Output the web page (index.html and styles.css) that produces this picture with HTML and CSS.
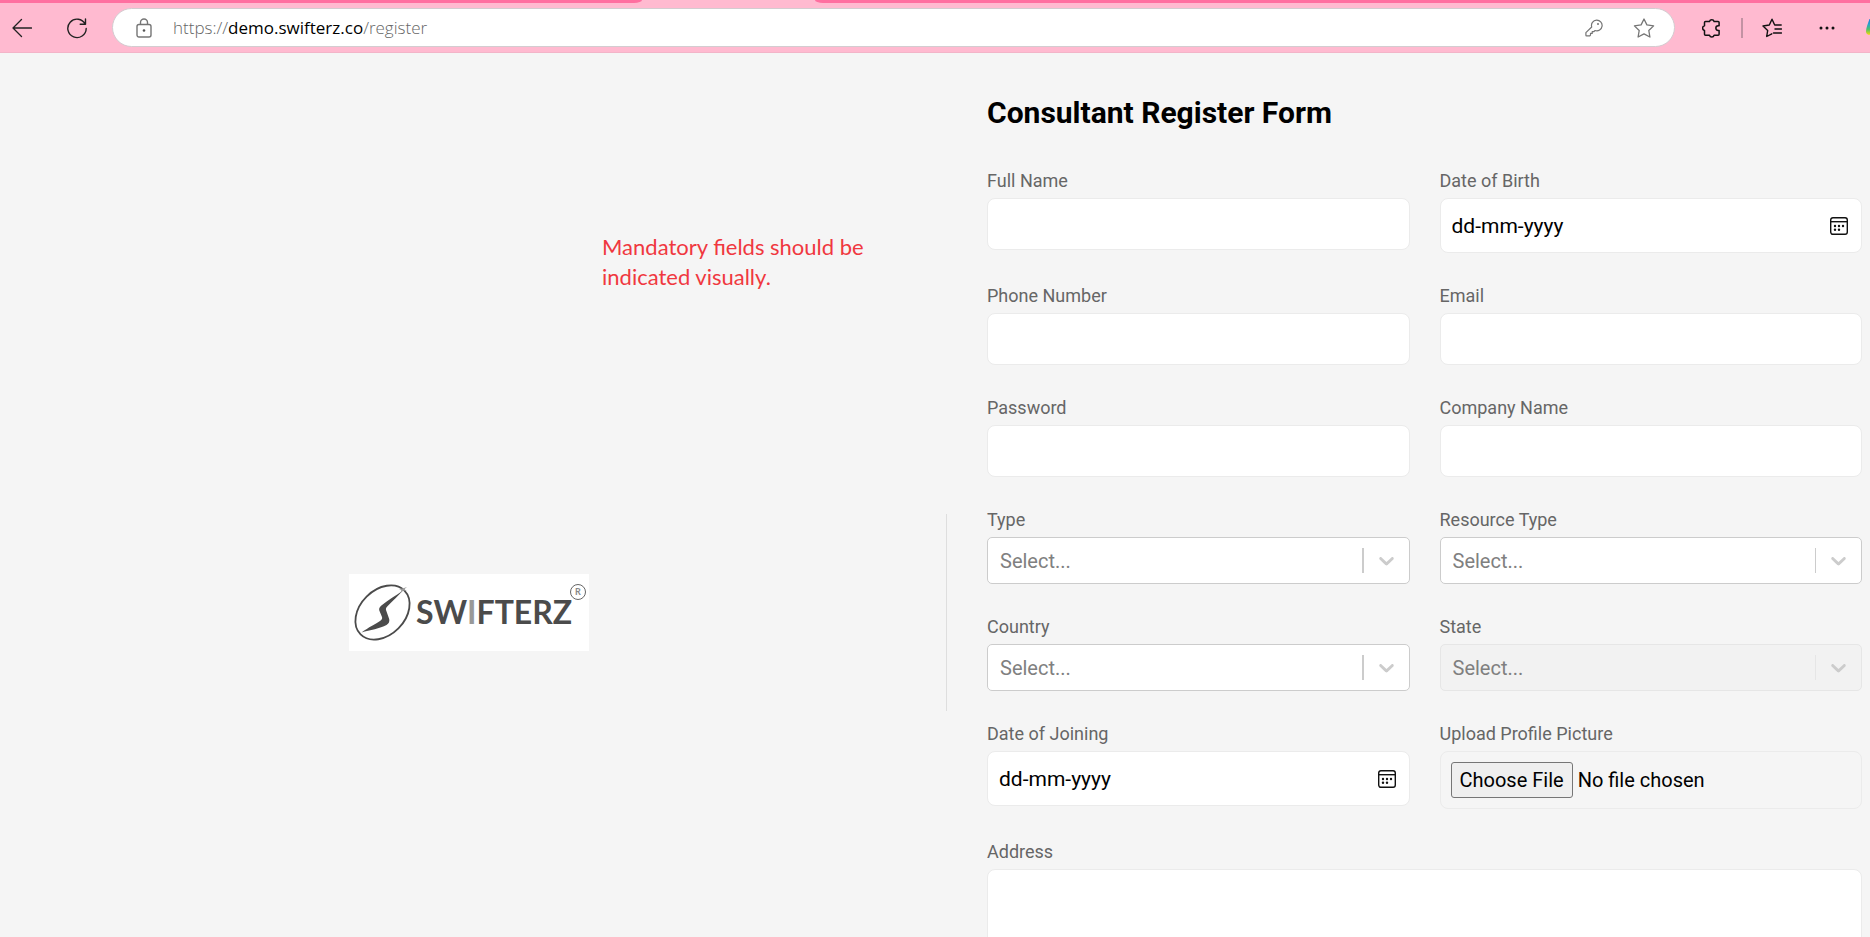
FILE: index.html
```html
<!DOCTYPE html>
<html lang="en">
<head>
<meta charset="utf-8">
<title>Consultant Register Form</title>
<link rel="stylesheet" href="styles.css">
</head>
<body>
<div class="shell">
  <div class="tabstrip"><span class="tabs-before"></span><span class="tab-active"></span><span class="tabs-after"></span></div>
  <header class="toolbar">
    <button class="icon-btn back" type="button" aria-label="Back">
      <svg width="20" height="20" viewBox="0 0 20 20" fill="none" stroke="#222" stroke-width="1.3" stroke-linecap="round" stroke-linejoin="round"><path d="M9.5 1.500 1 10l8.500 8.500M1 10h18.500"/></svg>
    </button>
    <button class="icon-btn refresh" type="button" aria-label="Refresh">
      <svg width="20" height="22" viewBox="0 0 20 22" fill="none" stroke="#222" stroke-width="1.400" stroke-linecap="round" stroke-linejoin="round"><path d="M18.200 7.200A9.200 9.200 0 1 0 19.200 11.500M18.500 2v5.300h-5.300"/></svg>
    </button>
    <div class="address">
      <svg class="lock" width="16" height="20" viewBox="0 0 16 20" fill="none" stroke="#757575" stroke-width="1.400"><rect x="1" y="6.500" width="14" height="12.500" rx="2"/><path d="M4.500 6.500V4.500a3.500 3.500 0 0 1 7 0v2"/><circle cx="8" cy="12.500" r="1.300" fill="#555" stroke="none"/></svg>
      <span class="url">https://<b>demo.swifterz.co</b>/register</span>
      <button class="icon-btn" type="button" aria-label="Saved passwords">
        <svg width="18" height="18" viewBox="0 0 18 18" fill="none" stroke="#757575" stroke-width="1.200" stroke-linejoin="round"><path d="M11.500 1.200a5.300 5.300 0 1 1-1.400 10.300L8.700 12.700H7.200v1.700H5.500v1.700L4.800 16.900H1.500a.6.6 0 0 1-.6-.6V13.600L6.700 8A5.300 5.300 0 0 1 11.500 1.200z"/><circle cx="13" cy="4.900" r="1" fill="#757575" stroke="none"/></svg>
      </button>
      <button class="icon-btn favorite" type="button" aria-label="Add to favorites">
        <svg width="22" height="20" viewBox="0 0 22 20" fill="none" stroke="#757575" stroke-width="1.300" stroke-linejoin="round"><path d="m11 1 2.900 5.900 6.700 1-4.800 4.600 1.100 6.500-5.900-3.100L5.100 19l1.100-6.500L1.400 7.900l6.700-1z"/></svg>
      </button>
    </div>
    <button class="icon-btn extensions" type="button" aria-label="Extensions">
      <svg width="18" height="20" viewBox="0 0 18 20" fill="none" stroke="#111" stroke-width="1.500" stroke-linejoin="round"><path d="M3.500 3.500h4a2.400 2.400 0 0 1 4.600 0h4a1 1 0 0 1 1 1v3.200h-.9a2.300 2.300 0 0 0 0 4.700h.9v3.800a1 1 0 0 1-1 1h-4a2.400 2.400 0 0 1-4.600 0h-4a1 1 0 0 1-1-1v-3.800a2.400 2.400 0 0 1 0-4.700V4.500a1 1 0 0 1 1-1z"/></svg>
    </button>
    <span class="sep"></span>
    <button class="icon-btn favorites" type="button" aria-label="Favorites">
      <svg width="20" height="20" viewBox="0 0 20 20" fill="none" stroke="#111" stroke-width="1.400" stroke-linecap="round" stroke-linejoin="round"><path d="M9.800 15.800 4.700 18.500l1-6.100L1 8l6.300-1L10 1.200 12.700 7h6.500M13 11h6.500M11.500 15h8"/></svg>
    </button>
    <button class="icon-btn more" type="button" aria-label="Settings and more">
      <svg width="16" height="4" viewBox="0 0 16 4" fill="#111"><circle cx="2" cy="2" r="1.500"/><circle cx="8" cy="2" r="1.500"/><circle cx="14" cy="2" r="1.500"/></svg>
    </button>
    <button class="icon-btn assistant" type="button" aria-label="Assistant">
      <svg width="24" height="18" viewBox="0 0 24 18"><defs><linearGradient id="g" x1="0" y1="0" x2="0" y2="1"><stop offset="0" stop-color="#1b78d8"/><stop offset=".35" stop-color="#2aa5c8"/><stop offset=".65" stop-color="#4fc16a"/><stop offset="1" stop-color="#f5d90a"/></linearGradient></defs><path d="M3.500 0C2 4 0 9 0 12.500 0 15 1.500 15.800 4 15.800h14c3 0 6-10 6-13S22 0 20 0z" fill="url(#g)"/></svg>
    </button>
  </header>

  <main class="page">
    <div class="content">
      <section class="brand">
        <p class="note">Mandatory fields should be indicated visually.</p>
        <svg class="logo" width="240" height="77" viewBox="0 0 240 77" role="img" aria-label="Swifterz">
          <rect width="240" height="77" fill="#fff"/>
          <ellipse cx="33.500" cy="38.500" rx="31" ry="22.500" transform="rotate(-45 33.500 38.500)" fill="none" stroke="#4b4b4b" stroke-width="1.800"/>
          <path d="M12.500 58.500C20 53 26 50.500 31 47c2-1.500 2.500-2.500 2-4l-2.700-6.500c-.6-2 .4-3.500 2.400-5.200C39 26 47 21.500 54 16.500 49 22 43.500 27 38.700 32c-1.500 1.500-2 2.500-1.700 4l3.200 9c.5 2.500-.3 4.500-2.700 6C31 54.500 21 56 12.500 58.500z" fill="#4b4b4b"/>
          <path d="m50 15 4.300-.8L58 13l-3 2.500 3 1-4 .3-2.500 2 .8-2.800z" fill="#999"/>
          <text class="wordmark" x="67" y="50">SW<tspan class="wordmark-light">I</tspan>FTERZ</text>
          <circle cx="229" cy="18" r="7.500" fill="#fff" stroke="#666" stroke-width="1"/>
          <text class="mark" x="229" y="21" text-anchor="middle">R</text>
        </svg>
        <span class="divider"></span>
      </section>

      <form class="register">
        <h1>Consultant Register Form</h1>
        <div class="fields">
          <div class="field"><label for="name">Full Name</label><input class="box" id="name" type="text"></div>
          <div class="field">
            <label for="dob">Date of Birth</label>
            <div class="box date"><input id="dob" type="text" placeholder="dd-mm-yyyy">
              <button class="icon-btn" type="button" aria-label="Pick date of birth"><svg width="18" height="18" viewBox="0 0 18 18" fill="none" stroke="#111" stroke-width="1.400"><rect x=".7" y=".7" width="16.600" height="16.600" rx="2.200"/><path d="M.7 4.700h16.600"/><g fill="#111" stroke="none"><circle cx="5" cy="9" r="1.200"/><circle cx="9" cy="9" r="1.200"/><circle cx="13" cy="9" r="1.200"/><circle cx="5" cy="12.800" r="1.200"/><circle cx="9" cy="12.800" r="1.200"/></g></svg></button>
            </div>
          </div>
          <div class="field"><label for="phone">Phone Number</label><input class="box" id="phone" type="tel"></div>
          <div class="field"><label for="email">Email</label><input class="box" id="email" type="email"></div>
          <div class="field"><label for="password">Password</label><input class="box" id="password" type="password"></div>
          <div class="field"><label for="company">Company Name</label><input class="box" id="company" type="text"></div>
          <div class="field">
            <label for="type">Type</label>
            <div class="picker thick"><select id="type"><option>Select...</option></select><span class="indicator"><svg width="25" height="25" viewBox="0 0 20 20"><path d="M4.516 7.548c0.436-0.446 1.043-0.481 1.576 0l3.908 3.747 3.908-3.747c0.533-0.481 1.141-0.446 1.574 0 0.436 0.445 0.408 1.197 0 1.615-0.406 0.418-4.695 4.502-4.695 4.502-0.217 0.223-0.502 0.335-0.787 0.335s-0.570-0.112-0.789-0.335c0 0-4.287-4.084-4.695-4.502s-0.436-1.170 0-1.615z"/></svg></span></div>
          </div>
          <div class="field">
            <label for="resource">Resource Type</label>
            <div class="picker"><select id="resource"><option>Select...</option></select><span class="indicator"><svg width="25" height="25" viewBox="0 0 20 20"><path d="M4.516 7.548c0.436-0.446 1.043-0.481 1.576 0l3.908 3.747 3.908-3.747c0.533-0.481 1.141-0.446 1.574 0 0.436 0.445 0.408 1.197 0 1.615-0.406 0.418-4.695 4.502-4.695 4.502-0.217 0.223-0.502 0.335-0.787 0.335s-0.570-0.112-0.789-0.335c0 0-4.287-4.084-4.695-4.502s-0.436-1.170 0-1.615z"/></svg></span></div>
          </div>
          <div class="field">
            <label for="country">Country</label>
            <div class="picker thick"><select id="country"><option>Select...</option></select><span class="indicator"><svg width="25" height="25" viewBox="0 0 20 20"><path d="M4.516 7.548c0.436-0.446 1.043-0.481 1.576 0l3.908 3.747 3.908-3.747c0.533-0.481 1.141-0.446 1.574 0 0.436 0.445 0.408 1.197 0 1.615-0.406 0.418-4.695 4.502-4.695 4.502-0.217 0.223-0.502 0.335-0.787 0.335s-0.570-0.112-0.789-0.335c0 0-4.287-4.084-4.695-4.502s-0.436-1.170 0-1.615z"/></svg></span></div>
          </div>
          <div class="field">
            <label for="state">State</label>
            <div class="picker disabled"><select id="state" disabled><option>Select...</option></select><span class="indicator"><svg width="25" height="25" viewBox="0 0 20 20"><path d="M4.516 7.548c0.436-0.446 1.043-0.481 1.576 0l3.908 3.747 3.908-3.747c0.533-0.481 1.141-0.446 1.574 0 0.436 0.445 0.408 1.197 0 1.615-0.406 0.418-4.695 4.502-4.695 4.502-0.217 0.223-0.502 0.335-0.787 0.335s-0.570-0.112-0.789-0.335c0 0-4.287-4.084-4.695-4.502s-0.436-1.170 0-1.615z"/></svg></span></div>
          </div>
          <div class="field">
            <label for="joining">Date of Joining</label>
            <div class="box date"><input id="joining" type="text" placeholder="dd-mm-yyyy">
              <button class="icon-btn" type="button" aria-label="Pick date of joining"><svg width="18" height="18" viewBox="0 0 18 18" fill="none" stroke="#111" stroke-width="1.400"><rect x=".7" y=".7" width="16.600" height="16.600" rx="2.200"/><path d="M.7 4.700h16.600"/><g fill="#111" stroke="none"><circle cx="5" cy="9" r="1.200"/><circle cx="9" cy="9" r="1.200"/><circle cx="13" cy="9" r="1.200"/><circle cx="5" cy="12.800" r="1.200"/><circle cx="9" cy="12.800" r="1.200"/></g></svg></button>
            </div>
          </div>
          <div class="field"><label for="picture">Upload Profile Picture</label><input class="box file" id="picture" type="file"></div>
          <div class="field wide"><label for="address">Address</label><textarea class="box" id="address" rows="10"></textarea></div>
        </div>
      </form>
    </div>
  </main>
</div>
</body>
</html>
```
FILE: styles.css
```css
* { box-sizing: border-box; }

body {
  margin: 0;
  background: #f5f5f5;
  font-family: Roboto, "Liberation Sans", sans-serif;
}

.shell {
  display: flex;
  flex-direction: column;
  height: 100vh;
  overflow: hidden;
}

/* Browser chrome */
.tabstrip {
  display: flex;
  height: 3px;
  background: #ffbad0;
}
.tabs-before { flex: 642; background: #ff6fa0; border-bottom-right-radius: 8px 3px; }
.tab-active { flex: 173; }
.tabs-after { flex: 1055; background: #ff6fa0; border-bottom-left-radius: 8px 3px; }

.toolbar {
  display: flex;
  align-items: center;
  height: 50px;
  padding-left: 12px;
  background: #ffbad0;
  border-bottom: 1px solid #f3b4c8;
}

.icon-btn {
  display: flex;
  flex: none;
  padding: 0;
  border: 0;
  background: none;
}
.icon-btn svg { flex: none; }

.refresh { margin: 0 25px 0 35px; }

.address {
  display: flex;
  flex: 1;
  align-items: center;
  height: 39px;
  padding: 0 19px 0 23px;
  border: 1px solid #d3ccd0;
  border-radius: 20px;
  background: #fff;
}
.lock { flex: none; margin-right: 21px; }
.url {
  flex: 1;
  color: #666;
  font: 300 17px/24px "Open Sans", "Noto Sans", sans-serif;
}
.url b { color: #000; font-weight: 400; }
.favorite { margin-left: 30px; }

.extensions { margin: 0 21px 0 27px; }
.sep { width: 2px; height: 20px; background: #c392a3; }
.favorites { margin: 0 37px 0 19px; }
.more { margin-right: 31px; }
.assistant { width: 4px; overflow: hidden; }

/* Page */
.page { flex: 1; overflow: hidden; }

.content {
  display: grid;
  grid-template-columns: minmax(0, 947fr) minmax(0, 923fr);
}

.brand {
  position: relative;
  display: flex;
  align-items: center;
}
.brand::after {
  content: "";
  order: 1;
  width: 8px;
}
.divider { order: 2; width: 1px; height: 197px; background: #dedede; }
.logo { margin: 0 auto; }
.wordmark { fill: #4b4b4b; font: 700 32px Lato, sans-serif; }
.wordmark-light { fill: #999; }
.mark { fill: #888; font: 700 9px Lato, sans-serif; }

.note {
  position: absolute;
  top: 179px;
  left: 602px;
  width: 300px;
  margin: 0;
  color: #f0383f;
  font: 22px/30px Lato, sans-serif;
}

.register { padding: 42px 8px 40px 40px; }

h1 {
  margin: 0 0 38px;
  font-size: 30px;
  font-weight: 700;
  line-height: 36px;
}

.fields {
  display: grid;
  grid-template-columns: repeat(2, minmax(0, 1fr));
  gap: 31px 30px;
  align-items: start;
}
.field { display: flex; flex-direction: column; gap: 5px; }
.wide { grid-column: 1 / -1; }

label { color: #666; font-size: 18px; line-height: 24px; }

.box {
  width: 100%;
  height: 52px;
  padding: 10px;
  border: 1px solid #ebebeb;
  border-radius: 8px;
  background: #fff;
  color: #000;
  font: 20px/24px Roboto, sans-serif;
}
textarea.box { height: auto; resize: none; }

.date {
  display: flex;
  align-items: center;
  height: 55px;
  padding: 0 13px 0 11px;
  font-size: 21px;
}
.date input {
  flex: 1;
  min-width: 0;
  padding: 0;
  border: 0;
  background: none;
  font: inherit;
}
.date input::placeholder { color: #000; }

.file { height: 58px; background: transparent; }
.file::file-selector-button {
  height: 36px;
  margin: 0 5px 0 0;
  padding: 0 8px;
  border: 1px solid #767676;
  border-radius: 3px;
  background: #efefef;
  color: #000;
  font: inherit;
}

.picker { display: grid; }
.picker select,
.indicator { grid-area: 1 / 1; }
.picker select {
  width: 100%;
  height: 47px;
  padding: 0 12px;
  border: 1px solid #ccc;
  border-radius: 5px;
  background: #fff;
  color: #808080;
  font: 20px/24px Roboto, sans-serif;
  appearance: none;
  opacity: 1;
}
.indicator {
  display: flex;
  place-self: center end;
  align-items: center;
  height: 25px;
  padding: 0 11px 0 10px;
  border-left: 1px solid #ccc;
  pointer-events: none;
}
.indicator path { fill: #ccc; }
.thick .indicator { border-left-width: 2px; }
.disabled select { border-color: #e6e6e6; background: #f2f2f2; }
.disabled .indicator { border-color: #e6e6e6; }
```
